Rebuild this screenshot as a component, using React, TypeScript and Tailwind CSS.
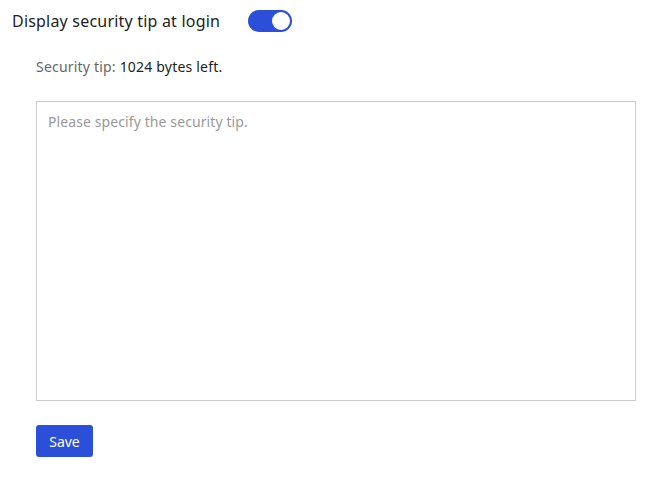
import React, { useState } from 'react';

const App: React.FC = () => {
  const [enabled, setEnabled] = useState(true);
  const [tip, setTip] = useState('');

  return (
    <div className="w-[668px] h-[492px] bg-white font-['Noto_Sans','Liberation_Sans',sans-serif] text-[#333]">
      <div className="flex items-center h-[42px] pl-[12px]">
        <span className="text-[16px] text-[#222] tracking-[0.2px] w-[236px]">Display security tip at login</span>
        <button
          type="button"
          onClick={() => setEnabled(!enabled)}
          className={`relative w-[44px] h-[22px] rounded-full ${enabled ? 'bg-[#2b4fd8]' : 'bg-[#ccc]'}`}
        >
          <span className={`absolute top-[2px] w-[18px] h-[18px] rounded-full bg-white ${enabled ? 'left-[24px]' : 'left-[2px]'}`} />
        </button>
      </div>

      <div className="pl-[36px] pt-[15px] text-[14px] leading-[20px] tracking-[0.2px]">
        <span className="text-[#666]">Security tip: </span>
        <span className="text-[#222]">{1024 - tip.length} bytes left.</span>
      </div>

      <div className="pl-[36px] pt-[24px]">
        <textarea
          value={tip}
          onChange={(e) => setTip(e.target.value)}
          placeholder="Please specify the security tip."
          className="block w-[600px] h-[300px] border border-[#ccc] px-[11px] py-[10px] text-[14px] leading-[20px] tracking-[0.1px] resize-none outline-none placeholder:text-[#999]"
        />
      </div>

      <div className="pl-[36px] pt-[24px]">
        <button
          type="button"
          className="w-[57px] h-[32px] rounded-[3px] bg-[#2b4fd8] text-white text-[14px]"
        >
          Save
        </button>
      </div>
    </div>
  );
};

export default App;
